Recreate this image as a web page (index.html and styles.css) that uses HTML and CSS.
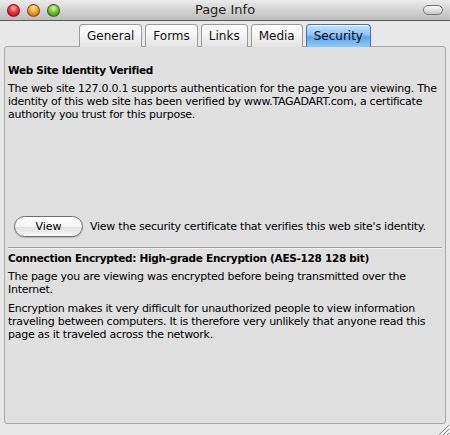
FILE: index.html
```html
<!DOCTYPE html>
<html>
<head>
<meta charset="utf-8">
<link rel="stylesheet" href="styles.css">
</head>
<body>
<div class="window">
  <div class="titlebar">
    <div class="lights">
      <span class="light red"></span>
      <span class="light orange"></span>
      <span class="light green"></span>
    </div>
    <div class="title">Page Info</div>
    <span class="pill"></span>
  </div>
  <div class="tabs">
    <div class="tab">General</div>
    <div class="tab">Forms</div>
    <div class="tab">Links</div>
    <div class="tab">Media</div>
    <div class="tab active">Security</div>
  </div>
  <div class="panel">
    <div class="identity">
      <h2 class="head">Web Site Identity Verified</h2>
      <p class="para">The web site 127.0.0.1 supports authentication for the page you are viewing. The<br>identity of this web site has been verified by www.TAGADART.com, a certificate<br>authority you trust for this purpose.</p>
      <div class="spacer"></div>
      <div class="viewrow">
        <button class="btn">View</button>
        <span class="viewtext">View the security certificate that verifies this web site's identity.</span>
      </div>
    </div>
    <div class="sep"></div>
    <div class="encryption">
      <h2 class="head">Connection Encrypted: High-grade Encryption (AES-128 128 bit)</h2>
      <p class="para">The page you are viewing was encrypted before being transmitted over the<br>Internet.</p>
      <p class="para second">Encryption makes it very difficult for unauthorized people to view information<br>traveling between computers. It is therefore very unlikely that anyone read this<br>page as it traveled across the network.</p>
    </div>
  </div>
  <div class="footer">
    <svg class="grip" width="12" height="11" viewBox="0 0 12 11">
      <path d="M11 1 L1 11 M11 5 L5 11 M11 9 L9 11" stroke="#8a8a8a" stroke-width="1"/>
      <path d="M12 2 L2 12 M12 6 L6 12" stroke="#ffffff" stroke-width="1"/>
    </svg>
  </div>
</div>
</body>
</html>
```

FILE: styles.css
```css
* { box-sizing: border-box; }
html, body { margin: 0; padding: 0; }
body {
  font-family: "DejaVu Sans", "Liberation Sans", sans-serif;
  font-size: 11px;
  color: #000;
  background: #e8e8e8;
}
.window {
  width: 450px;
  height: 435px;
  display: flex;
  flex-direction: column;
  background: #e8e8e8;
  overflow: hidden;
}
.titlebar {
  height: 21px;
  flex: none;
  display: flex;
  align-items: center;
  position: relative;
  background: linear-gradient(#ececec, #d4d4d4 50%, #bdbdbd);
  border-bottom: 1px solid #5a5a5a;
}
.lights {
  display: flex;
  gap: 7px;
  padding-left: 7px;
}
.light {
  width: 13px;
  height: 13px;
  border-radius: 50%;
  display: block;
  border: 1px solid rgba(0,0,0,0.45);
}
.red { background: radial-gradient(circle at 50% 30%, #ffb4b4 0, #f2343a 45%, #9e0a10 100%); }
.orange { background: radial-gradient(circle at 50% 30%, #ffe8a8 0, #f7a028 45%, #a85a08 100%); }
.green { background: radial-gradient(circle at 50% 30%, #d8f8b0 0, #74c434 45%, #2f7a10 100%); }
.title {
  position: absolute;
  left: 0;
  right: 0;
  top: 0;
  line-height: 20px;
  text-align: center;
  font-size: 13px;
  color: #222;
}
.pill {
  position: absolute;
  right: 7px;
  top: 5px;
  width: 20px;
  height: 10px;
  border-radius: 5px;
  border: 1px solid #7a7a7a;
  background: linear-gradient(#fdfdfd, #c8c8c8);
}
.tabs {
  display: flex;
  justify-content: center;
  gap: 3px;
  margin-top: 3px;
  height: 23px;
  flex: none;
  position: relative;
  z-index: 1;
  margin-bottom: -1px;
}
.tab {
  font-size: 12px;
  padding: 0 7px;
  line-height: 22px;
  height: 23px;
  border: 1px solid #9a9a9a;
  border-bottom: none;
  border-radius: 4px 4px 0 0;
  background: linear-gradient(#ffffff, #f3f3f3 50%, #e4e4e4);
  color: #111;
  box-shadow: inset 0 1px 0 #fff;
}
.tab.active {
  background: linear-gradient(#c9e3fb, #8fc3f5 45%, #5ea8ef 55%, #8ec8f8);
  border-color: #3c6fc6;
  color: #0a0a0a;
}
.panel {
  margin: 0 4px;
  height: 378px;
  flex: none;
  border: 1px solid #a9a9a9;
  border-radius: 3px;
  background: #e0e0e0;
  padding: 17px 3px 0 3px;
  display: flex;
  flex-direction: column;
}
.identity {
  height: 173px;
  display: flex;
  flex-direction: column;
}
.head {
  margin: 0 0 5px 0;
  font-size: 10.5px;
  font-weight: bold;
  line-height: 13px;
  letter-spacing: -0.3px;
  white-space: nowrap;
}
.para {
  margin: 0;
  line-height: 13px;
  white-space: nowrap;
  letter-spacing: -0.27px;
}
.para.second { margin-top: 6px; }
.spacer { flex: 1; }
.viewrow {
  display: flex;
  align-items: center;
  gap: 7px;
  padding-left: 6px;
  white-space: nowrap;
}
.viewtext { letter-spacing: -0.25px; }
.btn {
  font-family: inherit;
  font-size: 11px;
  width: 69px;
  height: 21px;
  flex: none;
  border-radius: 11px;
  border: 1px solid #6e6e6e;
  background: linear-gradient(#ffffff, #f4f4f4 50%, #e2e2e2 55%, #f6f6f6);
  color: #000;
  padding: 0;
  box-shadow: 0 1px 1px rgba(0,0,0,0.2);
}
.sep {
  margin: 10px 0 3px 0;
  height: 2px;
  flex: none;
  border-top: 1px solid #a0a0a0;
  border-bottom: 1px solid #f2f2f2;
}
.footer {
  flex: 1;
  display: flex;
  justify-content: flex-end;
  align-items: flex-end;
}
.grip { display: block; }
```
